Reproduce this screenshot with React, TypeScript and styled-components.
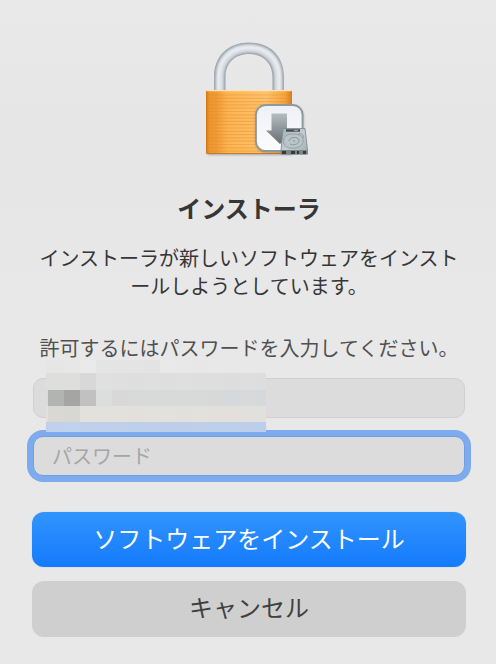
import React from 'react';
import styled, { createGlobalStyle } from 'styled-components';

const GlobalStyle = createGlobalStyle`
  *, *::before, *::after { box-sizing: border-box; }
  body {
    margin: 0;
    background: #e8e8e8;
    font-family: "Noto Sans CJK JP", sans-serif;
    color: #363636;
  }
`;

const Dialog = styled.main`
  display: flex;
  flex-direction: column;
  align-items: center;
  min-height: 100vh;
  padding: 36px 30px 24px 32px;
  background: linear-gradient(#e9e9e9, #e6e6e6 22%, #e8e8e8 45%);
`;

const LockIcon = styled.svg`
  display: block;
  width: 120px;
  height: 128px;
  margin-left: 14px;
`;

const Title = styled.h1`
  margin: 26px 0 0;
  font-size: 24px;
  line-height: 36px;
  font-weight: 700;
`;

const Message = styled.p`
  margin: 18px 0 0;
  font-size: 20px;
  line-height: 28px;
  text-align: center;
  line-break: anywhere;
`;

const Prompt = styled(Message)`
  margin-top: 34px;
  color: #505050;
`;

const Form = styled.form`
  display: flex;
  flex-direction: column;
  align-self: stretch;
  margin-top: 16px;
`;

const Fields = styled.div`
  display: flex;
  flex-direction: column;
  gap: 18px;
  padding: 0 1px;
`;

const Field = styled.div`
  position: relative;
`;

const TextInput = styled.input<{ $ring?: boolean }>`
  display: block;
  width: 100%;
  height: 40px;
  padding: 0 18px 2px;
  border: 1px solid ${p => (p.$ring ? '#719fe3' : '#d0d0d0')};
  border-radius: 10px;
  outline: none;
  background: #dcdcdc;
  box-shadow: ${p => (p.$ring ? '0 0 0 6px #7eabee' : 'none')};
  font: inherit;
  font-size: 20px;
  color: #363636;
  &::placeholder { color: #a6a6a6; opacity: 1; }
`;

const Mosaic = styled.div`
  position: absolute;
  z-index: 1;
  left: 13px;
  top: -18px;
  width: 220px;
  display: grid;
  grid-template-rows: 13px 17px 16px 16px 10px;
`;

const MosaicRow = styled.div`
  display: grid;
  grid-template-columns: 2px repeat(13, 16px) 1fr;
`;

const Tile = styled.span<{ $tone: string }>`
  background: ${p => p.$tone};
`;

const Actions = styled.div`
  display: flex;
  flex-direction: column;
  gap: 14px;
  margin-top: 36px;
`;

const Button = styled.button<{ $primary?: boolean }>`
  height: ${p => (p.$primary ? 55 : 56)}px;
  padding: 0 0 4px;
  border: 0;
  border-radius: 12px;
  background: ${p => (p.$primary ? 'linear-gradient(#3294fd, #147bfd)' : '#cfcfcf')};
  box-shadow: ${p => (p.$primary ? '0 0 1px #6faef5' : 'none')};
  color: ${p => (p.$primary ? '#fff' : '#404040')};
  font: inherit;
  font-size: 24px;
  line-height: 36px;
`;

const mosaic: string[][] = [
  ['#e6e6e6', '#e6e6e6', '#e7e7e7', '#eaeaea', '#e4e4e4', '#e4e4e4', '#e4e4e4', '#e3e3e3', '#e9e9e9', '#e8e8e8', '#e7e7e7', '#e8e8e8', '#e8e8e8', '#e8e8e8', '#e8e8e8'],
  ['#dedede', '#dededd', '#dedfdc', '#d8d8d8', '#e0e0e0', '#dfdfdf', '#dedede', '#dfdfdf', '#dedede', '#dfdfdf', '#dedede', '#dedede', '#dddddd', '#dedede', '#dddddd'],
  ['#d9dad9', '#b1b4b3', '#a5a5a5', '#c1c1c1', '#dcdddd', '#d7d8d7', '#d8dad9', '#d7dad8', '#d7dad9', '#d7dad9', '#d7dad9', '#d7d9d9', '#d6d9db', '#d7d9db', '#d6d9db'],
  ['#e2e0dc', '#d9d8d3', '#d8d8d3', '#e2e1db', '#e2e1dc', '#e2e1dc', '#e3e0dc', '#e2e1dc', '#e2e1dc', '#e2e0dc', '#e2e1dc', '#e3e0db', '#e3dfda', '#e2e0dc', '#e2e0dc'],
  ['#becfea', '#c0d1ed', '#c1d2ee', '#bfd0eb', '#bed0eb', '#bfd0eb', '#bdcfea', '#bdcfea', '#bdceea', '#bdceea', '#becfea', '#bdcfea', '#bdcfea', '#bdceea', '#bdceea'],
];

const slats = Array.from({ length: 18 }, (_, i) => 59 + i * 3.3);

function InstallerLock() {
  return (
    <LockIcon viewBox="0 0 120 128" aria-hidden="true">
      <defs>
        <linearGradient id="brass" x1="0" x2="1">
          <stop offset="0" stopColor="#cf7415" />
          <stop offset=".04" stopColor="#ee962e" />
          <stop offset=".12" stopColor="#f09a35" />
          <stop offset=".25" stopColor="#fdb453" />
          <stop offset=".7" stopColor="#ffc26d" />
          <stop offset=".92" stopColor="#f6a43c" />
          <stop offset="1" stopColor="#d27a1d" />
        </linearGradient>
        <linearGradient id="tile" x1="0" y1="0" x2="0" y2="1">
          <stop offset="0" stopColor="#eff0f5" />
          <stop offset="1" stopColor="#fdfdff" />
        </linearGradient>
        <linearGradient id="arrow" x1="0" y1="0" x2="0" y2="1">
          <stop offset="0" stopColor="#b4bec0" />
          <stop offset="1" stopColor="#686e72" />
        </linearGradient>
        <linearGradient id="disk" x1="0" y1="0" x2="1" y2="1">
          <stop offset="0" stopColor="#a4b0b5" />
          <stop offset=".5" stopColor="#c3ced2" />
          <stop offset="1" stopColor="#a2adb1" />
        </linearGradient>
        <filter id="soft" x="-20%" y="-20%" width="140%" height="150%">
          <feGaussianBlur stdDeviation="1.2" />
        </filter>
        <clipPath id="shackle">
          <path d="M18 54V41C18 20 32 6.500 53 6.500S88 20 88 41V54H76.500V41C76.500 27 67 18 53 18S29.500 27 29.500 41V54Z" />
        </clipPath>
      </defs>
      <rect x="11" y="114" width="86" height="5" rx="2" fill="#777" opacity=".55" filter="url(#soft)" />
      <g clipPath="url(#shackle)" fill="none">
        <path d="M18 60V41C18 20 32 6.500 53 6.500S88 20 88 41V60Z" fill="#d6dae0" />
        <path d="M18 60V41C18 20 32 6.500 53 6.500S88 20 88 41V60" stroke="#949ba6" strokeWidth="3" filter="url(#soft)" />
        <path d="M29.500 60V41C29.500 27 39 18 53 18S76.500 27 76.500 41V60" stroke="#9299a5" strokeWidth="3" filter="url(#soft)" />
        <path d="M23 60V41C23 23 35 11.500 53 11.500S83 23 83 41V60" stroke="#f2f4f7" strokeWidth="3" opacity=".8" filter="url(#soft)" />
      </g>
      <rect x="10" y="54" width="86" height="64" rx="1.500" fill="url(#brass)" />
      {slats.map(y => (
        <path key={y} d={`M10.500 ${y}H95.500`} stroke="#e08b2c" strokeWidth="1.200" opacity=".38" />
      ))}
      <path d="M10.500 54.600H95.500" stroke="#ffe3b1" strokeWidth="1.400" />
      <path d="M11 117.500H95" stroke="#c27a2a" strokeWidth="1" />
      <rect x="59.500" y="69.500" width="48" height="47" rx="10" fill="#555" opacity=".5" filter="url(#soft)" />
      <rect x="60" y="69" width="46.500" height="46" rx="9.500" fill="url(#tile)" stroke="#8d999d" strokeWidth="1.800" />
      <path d="M75.500 77.500H91V94.500H98L84 108L70 94.500H75.500Z" fill="url(#arrow)" />
      <path d="M87 92.500H109L111.500 114V118H85V114Z" fill="url(#disk)" stroke="#7c878c" strokeWidth=".8" />
      <path d="M85 114H111.500V118.500H85Z" fill="#7b8487" />
      <path d="M86 116.500H90M95 116.500H99M101 116.500H103M107 116.500H110" stroke="#363b3d" strokeWidth="3" />
      <path d="M90 94.500H104" stroke="#42494c" strokeWidth="2.400" />
      <path d="M98 94.500H102" stroke="#9ba3a6" strokeWidth="1" />
      <path d="M88 108C86 101 91 98 97 98C105 98 108 101 107 106C106 111 99 113 93 112C90 111 89 110 88 108Z" fill="#bac5c9" stroke="#8b989d" strokeWidth=".8" />
      <path d="M93 105C93 101 102 100 103 104C104 108 97 110 94 108M97 105H99M102 98C106 97 108 99 107 102" fill="none" stroke="#7e8c92" strokeWidth=".8" />
    </LockIcon>
  );
}

export default function App() {
  return (
    <>
      <GlobalStyle />
      <Dialog>
        <InstallerLock />
        <Title>インストーラ</Title>
        <Message>インストーラが新しいソフトウェアをインストールしようとしています。</Message>
        <Prompt>許可するにはパスワードを入力してください。</Prompt>
        <Form onSubmit={e => e.preventDefault()}>
          <Fields>
            <Field>
              <TextInput type="text" aria-label="ユーザ名" />
              <Mosaic aria-hidden="true">
                {mosaic.map((row, r) => (
                  <MosaicRow key={r}>
                    {row.map((tone, c) => <Tile key={c} $tone={tone} />)}
                  </MosaicRow>
                ))}
              </Mosaic>
            </Field>
            <Field>
              <TextInput $ring type="password" placeholder="パスワード" aria-label="パスワード" />
            </Field>
          </Fields>
          <Actions>
            <Button $primary type="submit">ソフトウェアをインストール</Button>
            <Button type="button">キャンセル</Button>
          </Actions>
        </Form>
      </Dialog>
    </>
  );
}
